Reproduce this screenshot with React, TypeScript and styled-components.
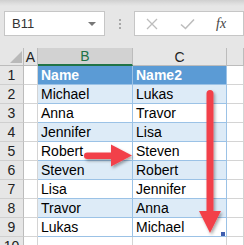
import React from "react";
import styled, { createGlobalStyle } from "styled-components";

const GlobalStyle = createGlobalStyle`
  html, body { margin: 0; padding: 0; background: #e6e6e6; }
  body { font-family: "Liberation Sans", Arial, sans-serif; }
`;

const Frame = styled.div`
  position: relative;
  width: 244px;
  height: 245px;
  overflow: hidden;
  background: #e6e6e6;
`;

const Toolbar = styled.div`
  height: 48px;
  box-sizing: border-box;
  display: flex;
  align-items: flex-start;
  padding: 11px 0 0 4px;
  background: linear-gradient(#cfcfcf 0px, #dcdcdc 3px, #e6e6e6 6px, #e6e6e6 100%);
`;

const NameBox = styled.div`
  width: 111px;
  height: 25px;
  box-sizing: border-box;
  background: #fff;
  border: 1px solid #c6c6c6;
  display: flex;
  align-items: center;
  justify-content: space-between;
  padding: 0 8px 0 7px;
  font-size: 13px;
  color: #333;
`;

const Caret = styled.span`
  width: 0;
  height: 0;
  border-left: 4px solid transparent;
  border-right: 4px solid transparent;
  border-top: 4px solid #777;
`;

const DotsArea = styled.div`
  width: 32px;
  height: 25px;
  display: flex;
  flex-direction: column;
  align-items: center;
  justify-content: center;
  gap: 2px;
`;

const Dot = styled.span`
  width: 2px;
  height: 2px;
  background: #a8a8a8;
`;

const FormulaBox = styled.div`
  width: 110px;
  flex-shrink: 0;
  height: 25px;
  box-sizing: border-box;
  background: #fff;
  border: 1px solid #c6c6c6;
  display: flex;
  align-items: center;
  padding-left: 11px;
  gap: 22px;
`;

const Fx = styled.span`
  font-family: "Liberation Serif", "Times New Roman", serif;
  font-style: italic;
  font-size: 14px;
  color: #444;
  margin-left: -1px;
`;

const Sheet = styled.div`
  display: grid;
  grid-template-columns: 24px 14px 95px 94px 1fr;
  grid-template-rows: 18px;
  grid-auto-rows: 19px;
  background: #fff;
`;

const HeadCell = styled.div<{ $selected?: boolean }>`
  box-sizing: border-box;
  background: ${(p) => (p.$selected ? "#d2d2d2" : "#e6e6e6")};
  border-right: 1px solid #bcbcbc;
  border-bottom: ${(p) => (p.$selected ? "2px solid #217346" : "1px solid #bcbcbc")};
  color: ${(p) => (p.$selected ? "#217346" : "#222")};
  font-size: 14px;
  display: flex;
  align-items: center;
  justify-content: center;
  position: relative;
`;

const Corner = styled(HeadCell)`
  &::after {
    content: "";
    position: absolute;
    right: 1px;
    bottom: 2px;
    width: 0;
    height: 0;
    border-left: 12px solid transparent;
    border-bottom: 12px solid #b9b9b9;
  }
`;

const RowNum = styled.div`
  box-sizing: border-box;
  background: #e6e6e6;
  border-right: 1px solid #bcbcbc;
  border-bottom: 1px solid #cfcfcf;
  font-size: 14px;
  color: #222;
  display: flex;
  align-items: center;
  justify-content: center;
`;

type Tone = "plain" | "head" | "band" | "white";

const Cell = styled.div<{ $tone: Tone }>`
  box-sizing: border-box;
  padding-left: 3px;
  font-size: 14px;
  line-height: 18px;
  white-space: nowrap;
  overflow: hidden;
  background: ${(p) =>
    p.$tone === "head" ? "#5b9bd5" : p.$tone === "band" ? "#ddebf7" : "#fff"};
  color: ${(p) => (p.$tone === "head" ? "#fff" : "#000")};
  font-weight: ${(p) => (p.$tone === "head" ? 700 : 400)};
  border-right: 1px solid ${(p) => (p.$tone === "plain" ? "#d4d4d4" : "#9bc2e6")};
  border-bottom: 1px solid ${(p) => (p.$tone === "plain" ? "#d4d4d4" : "#9bc2e6")};
`;

const Overlay = styled.svg`
  position: absolute;
  left: 0;
  top: 0;
  pointer-events: none;
`;

const rows: [string, string][] = [
  ["Name", "Name2"],
  ["Michael", "Lukas"],
  ["Anna", "Travor"],
  ["Jennifer", "Lisa"],
  ["Robert", "Steven"],
  ["Steven", "Robert"],
  ["Lisa", "Jennifer"],
  ["Travor", "Anna"],
  ["Lukas", "Michael"],
];

export default function App() {
  return (
    <>
      <GlobalStyle />
      <Frame>
        <Toolbar>
          <NameBox>
            <span>B11</span>
            <Caret />
          </NameBox>
          <DotsArea>
            <Dot />
            <Dot />
            <Dot />
          </DotsArea>
          <FormulaBox>
            <svg width="12" height="12" viewBox="0 0 12 12">
              <path d="M1 1 L11 11 M11 1 L1 11" stroke="#bdbdbd" strokeWidth="1.3" fill="none" />
            </svg>
            <svg width="15" height="12" viewBox="0 0 15 12">
              <path d="M1 6.5 L5.5 10.5 L14 1.5" stroke="#bdbdbd" strokeWidth="1.6" fill="none" />
            </svg>
            <Fx>fx</Fx>
          </FormulaBox>
        </Toolbar>
        <Sheet>
          <Corner />
          <HeadCell>A</HeadCell>
          <HeadCell $selected>B</HeadCell>
          <HeadCell>C</HeadCell>
          <HeadCell />
          {rows.map(([b, c], i) => {
            const tone: Tone = i === 0 ? "head" : i % 2 === 1 ? "band" : "white";
            return (
              <React.Fragment key={i}>
                <RowNum>{i + 1}</RowNum>
                <Cell $tone="plain" />
                <Cell $tone={tone}>{b}</Cell>
                <Cell $tone={tone}>{c}</Cell>
                <Cell $tone="plain" />
              </React.Fragment>
            );
          })}
          <RowNum>10</RowNum>
          <Cell $tone="plain" />
          <Cell $tone="plain" />
          <Cell $tone="plain" />
          <Cell $tone="plain" />
        </Sheet>
        <Overlay width="244" height="245" viewBox="0 0 244 245">
          <defs>
            <filter id="sh" x="-50%" y="-50%" width="200%" height="200%">
              <feDropShadow dx="1.5" dy="2" stdDeviation="1.4" floodColor="#000" floodOpacity="0.35" />
            </filter>
          </defs>
          <g filter="url(#sh)" fill="#f2414a">
            <rect x="206.5" y="90" width="7" height="124" rx="3.5" />
            <polygon points="199,211 221,211 210,233" />
            <rect x="84" y="152.5" width="30" height="6.5" rx="3.2" />
            <polygon points="111,144.5 111,166.5 132,155.5" />
          </g>
          <rect x="221" y="232" width="4" height="4" fill="#3f5fb0" />
        </Overlay>
      </Frame>
    </>
  );
}
